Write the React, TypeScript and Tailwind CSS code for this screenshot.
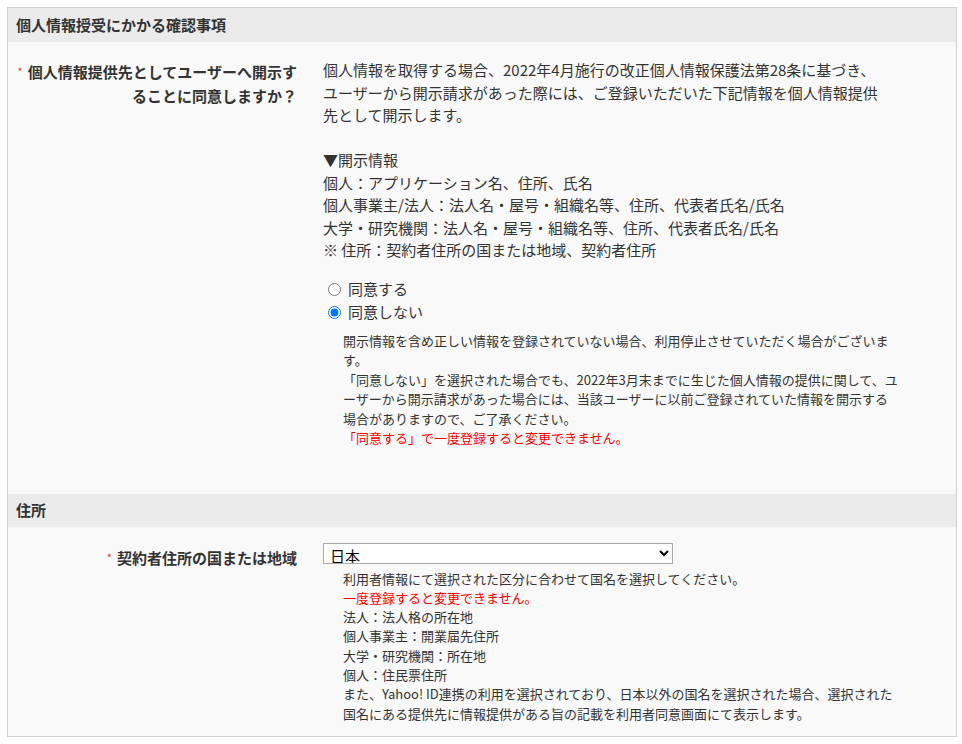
import React from "react";

function Req() {
  return <span className="text-[#e4393c] text-[11px] font-normal mr-[5px] align-[2px]">*</span>;
}

export default function App() {
  const noop = () => {};
  return (
    <div className="bg-white min-h-[744px] pt-[7px] pl-[7px] pr-[5px] font-['Noto_Sans_CJK_JP',sans-serif] text-[#333]">
      <div className="border border-[#cfcfcf] bg-[#f9f9f9] w-[950px]">
        {/* Section 1 header */}
        <div className="h-[34px] bg-[#ebebeb] flex items-center pl-[8px] text-[15px] font-bold">
          個人情報授受にかかる確認事項
        </div>
        <div className="flex pb-[46px]">
          <div className="w-[297px] shrink-0 pr-[8px] pt-[17px] text-right text-[15px] font-bold leading-[24px]">
            <Req />個人情報提供先としてユーザーへ開示す<br />ることに同意しますか？
          </div>
          <div className="pl-[18px] pt-[17px] text-[15px] leading-[22.5px] whitespace-nowrap">
            <p>
              個人情報を取得する場合、2022年4月施行の改正個人情報保護法第28条に基づき、<br />
              ユーザーから開示請求があった際には、ご登録いただいた下記情報を個人情報提供<br />
              先として開示します。
            </p>
            <p className="mt-[22.5px]">
              ▼開示情報<br />
              個人：アプリケーション名、住所、氏名<br />
              個人事業主/法人：法人名・屋号・組織名等、住所、代表者氏名/氏名<br />
              大学・研究機関：法人名・屋号・組織名等、住所、代表者氏名/氏名<br />
              ※ 住所：契約者住所の国または地域、契約者住所
            </p>
            <div className="mt-[17px] flex flex-col gap-[2px]">
              <label className="flex items-center h-[21px]">
                <input type="radio" name="agree" className="ml-[5px] mr-[7px] w-[13px] h-[13px]" checked={false} onChange={noop} />
                <span>同意する</span>
              </label>
              <label className="flex items-center h-[21px]">
                <input type="radio" name="agree" className="ml-[5px] mr-[7px] w-[13px] h-[13px]" checked={true} onChange={noop} />
                <span>同意しない</span>
              </label>
            </div>
            <div className="pl-[20px] mt-[8px] text-[13px] leading-[19.5px]">
              開示情報を含め正しい情報を登録されていない場合、利用停止させていただく場合がございま<br />
              す。<br />
              「同意しない」を選択された場合でも、2022年3月末までに生じた個人情報の提供に関して、ユ<br />
              ーザーから開示請求があった場合には、当該ユーザーに以前ご登録されていた情報を開示する<br />
              場合がありますので、ご了承ください。<br />
              <span className="text-[#ff0000]">「同意する」で一度登録すると変更できません。</span>
            </div>
          </div>
        </div>

        {/* Section 2 header */}
        <div className="h-[33px] bg-[#ebebeb] flex items-center pl-[8px] text-[15px] font-bold">
          住所
        </div>
        <div className="flex pb-[13px]">
          <div className="w-[297px] shrink-0 pr-[8px] pt-[18px] text-right text-[15px] font-bold leading-[24px]">
            <Req />契約者住所の国または地域
          </div>
          <div className="pl-[18px] pt-[16px] whitespace-nowrap">
            <select
              className="block w-[350px] h-[21px] border border-[#a9a9a9] bg-white text-[15px] py-0 pl-[2px] text-black"
              defaultValue="jp"
            >
              <option value="jp">日本</option>
            </select>
            <div className="pl-[20px] mt-[5px] text-[13px] leading-[19.3px]">
              利用者情報にて選択された区分に合わせて国名を選択してください。<br />
              <span className="text-[#ff0000]">一度登録すると変更できません。</span><br />
              法人：法人格の所在地<br />
              個人事業主：開業届先住所<br />
              大学・研究機関：所在地<br />
              個人：住民票住所<br />
              また、Yahoo! ID連携の利用を選択されており、日本以外の国名を選択された場合、選択された<br />
              国名にある提供先に情報提供がある旨の記載を利用者同意画面にて表示します。
            </div>
          </div>
        </div>
      </div>
    </div>
  );
}
